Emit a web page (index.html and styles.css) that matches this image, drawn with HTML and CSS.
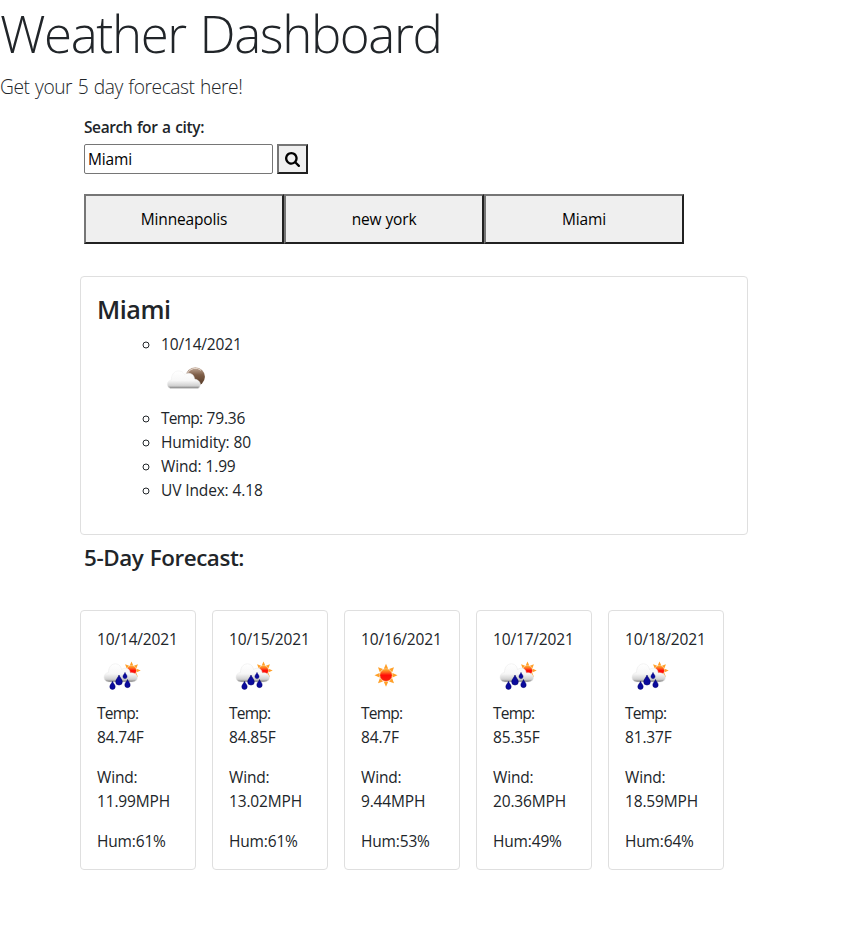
FILE: index.html
```html
<!DOCTYPE html>
<html lang="en">
<head>
<meta charset="utf-8">
<title>Weather Dashboard</title>
<link rel="stylesheet" href="styles.css">
</head>
<body>
<svg class="defs" width="0" height="0" aria-hidden="true">
  <defs>
    <linearGradient id="cloud-fill" x1="0" y1="0" x2="0" y2="1">
      <stop offset="0" stop-color="#fff"/><stop offset=".55" stop-color="#f7f7f7"/><stop offset=".85" stop-color="#d0d0d0"/><stop offset="1" stop-color="#777"/>
    </linearGradient>
    <linearGradient id="moon-fill" x1="0" y1="0" x2="0" y2="1">
      <stop offset="0" stop-color="#c5ad9b"/><stop offset=".4" stop-color="#7d5d47"/><stop offset="1" stop-color="#513522"/>
    </linearGradient>
    <linearGradient id="sun-fill" x1="0" y1="0" x2="0" y2="1">
      <stop offset="0" stop-color="#ffb52e"/><stop offset=".3" stop-color="#ff5a1c"/><stop offset=".5" stop-color="#ff0d08"/><stop offset="1" stop-color="#f8200c"/>
    </linearGradient>
    <g id="sun-shape">
      <path fill="#ffa028" d="M0-11.5 2.2-6.5H-2.2ZM0 11.5 2.2 6.5H-2.2ZM-11.5 0-6.5-2.2V2.2ZM11.5 0 6.5-2.2V2.2ZM-8-8-3-6.2-6.2-3ZM8-8 3-6.2 6.2-3ZM-8 8-3 6.2-6.2 3ZM8 8 3 6.2 6.2 3Z"/>
      <circle r="6.1" fill="url(#sun-fill)" stroke="#ff9d35" stroke-width=".6"/>
    </g>
    <path id="drop" d="M0-4.5C.8-2 3-.6 3 1.6A3 3 0 0 1-3 1.6C-3-.6-.8-2 0-4.5Z" fill="#0b0b9c" stroke="#00006a" stroke-width=".5"/>
    <symbol id="rain" viewBox="0 0 50 50">
      <use href="#sun-shape" transform="translate(34.500 19.600) scale(.8)"/>
      <path fill="url(#cloud-fill)" stroke="#e6e6e6" stroke-width=".5" d="M12 31C5.500 31 5.500 22 11.500 21.500C11.500 10.500 23.500 10.500 24.500 18.500C29 15.500 33.500 18 33 22C42 20.500 43 31 35 31Z"/>
      <use href="#drop" transform="translate(22 29) scale(1.100)"/>
      <use href="#drop" transform="translate(28 24.500) scale(.7)"/>
      <use href="#drop" transform="translate(30.500 32.500) scale(.9)"/>
      <use href="#drop" transform="translate(15.500 34.300) scale(.9)"/>
    </symbol>
    <symbol id="clear" viewBox="0 0 50 50"><use href="#sun-shape" x="25" y="24.200"/></symbol>
    <symbol id="night" viewBox="0 0 50 50">
      <circle cx="34.300" cy="20.800" r="9.600" fill="url(#moon-fill)"/>
      <path d="M26.500 17A9 9 0 0 1 40 14.300" fill="none" stroke="#e3d5ca" stroke-width="1"/>
      <path fill="url(#cloud-fill)" stroke="#ececec" stroke-width=".5" d="M9.500 32.500C4.800 31 5.500 24.300 10.500 24C9.800 14 20.500 12.500 23.500 18.500C28 15.500 33.500 18 33.500 23C39.500 24 41.500 30 37 32.500Z"/>
    </symbol>
  </defs>
</svg>

<header>
  <h1 class="title">Weather Dashboard</h1>
  <p class="lead">Get your 5 day forecast here!</p>
</header>

<main class="content">
  <form class="search">
    <label class="search-label" for="city">Search for a city:</label>
    <div class="search-row">
      <input class="search-input" id="city" type="text" value="Miami">
      <button class="search-button" type="button" aria-label="Search">
        <svg width="15" height="15" viewBox="0 0 1664 1664"><path d="M1152 704q0-185-131.500-316.500T704 256 387.500 387.500 256 704t131.500 316.500T704 1152t316.500-131.500T1152 704zm512 832q0 52-38 90t-90 38q-54 0-90-38l-343-342q-179 124-399 124-143 0-273.500-55.500t-225-150-150-225T0 704t55.500-273.500 150-225 225-150T704 0t273.500 55.500 225 150 150 225T1408 704q0 220-124 399l343 343q37 37 37 90z"/></svg>
      </button>
    </div>
  </form>

  <div class="history">
    <button class="city" type="button">Minneapolis</button>
    <button class="city" type="button">new york</button>
    <button class="city" type="button">Miami</button>
  </div>

  <section class="card current">
    <h3 class="current-name">Miami</h3>
    <ul class="facts">
      <li>10/14/2021</li>
      <li class="icon-row"><svg class="weather-icon" width="50" height="50"><use href="#night"/></svg></li>
      <li><span class="temp">Temp:</span> 79.36</li>
      <li>Humidity: 80</li>
      <li>Wind: 1.99</li>
      <li>UV Index: 4.18</li>
    </ul>
  </section>

  <h4 class="forecast-title">5-Day Forecast:</h4>
  <section class="forecast">
    <article class="card day">
      <div>10/14/2021</div>
      <svg class="weather-icon" width="50" height="50"><use href="#rain"/></svg>
      <p><span class="temp">Temp:</span><br>84.74F</p><p>Wind:<br>11.99MPH</p><p>Hum:61%</p>
    </article>
    <article class="card day">
      <div>10/15/2021</div>
      <svg class="weather-icon" width="50" height="50"><use href="#rain"/></svg>
      <p><span class="temp">Temp:</span><br>84.85F</p><p>Wind:<br>13.02MPH</p><p>Hum:61%</p>
    </article>
    <article class="card day">
      <div>10/16/2021</div>
      <svg class="weather-icon" width="50" height="50"><use href="#clear"/></svg>
      <p><span class="temp">Temp:</span><br>84.7F</p><p>Wind:<br>9.44MPH</p><p>Hum:53%</p>
    </article>
    <article class="card day">
      <div>10/17/2021</div>
      <svg class="weather-icon" width="50" height="50"><use href="#rain"/></svg>
      <p><span class="temp">Temp:</span><br>85.35F</p><p>Wind:<br>20.36MPH</p><p>Hum:49%</p>
    </article>
    <article class="card day">
      <div>10/18/2021</div>
      <svg class="weather-icon" width="50" height="50"><use href="#rain"/></svg>
      <p><span class="temp">Temp:</span><br>81.37F</p><p>Wind:<br>18.59MPH</p><p>Hum:64%</p>
    </article>
  </section>
</main>
</body>
</html>
```
FILE: styles.css
```css
*, *::before, *::after { box-sizing: border-box; }

body {
  margin: 0;
  background: #fff;
  color: #212529;
  font-family: "Segoe UI", "Open Sans", "Noto Sans", sans-serif;
  font-size: 15.5px;
  line-height: 24px;
  letter-spacing: -0.16px;
  word-spacing: 0.2px;
}

h1, h3, h4, p, ul { margin: 0; }

button, input { font: inherit; letter-spacing: inherit; word-spacing: inherit; color: #000; }

.defs { position: absolute; }

.title {
  margin-bottom: 6px;
  font-size: 51px;
  font-weight: 300;
  line-height: 66px;
  letter-spacing: -1.4px;
  word-spacing: 2px;
  white-space: nowrap;
}

.lead {
  margin-bottom: 13px;
  font-size: 19.2px;
  font-weight: 300;
  line-height: 30px;
  letter-spacing: -0.44px;
  word-spacing: 1px;
}

.content { padding-left: 80px; }

.search { padding-left: 4px; }

.search-label {
  display: block;
  margin-bottom: 5px;
  font-weight: 600;
  letter-spacing: -0.4px;
  word-spacing: 1px;
}

.search-row { display: flex; gap: 4px; }

.search-input {
  width: 189px;
  height: 30px;
  padding: 1px 3px;
  border: 1px solid #767676;
  border-radius: 2px;
  background: #fff;
}

.search-button {
  display: flex;
  align-items: center;
  justify-content: center;
  width: 31px;
  height: 30px;
  padding: 0;
  border: 2px solid;
  border-color: #767676 #212121 #212121 #767676;
  background: #efefef;
}

.history { display: flex; margin: 20px 0 32px 4px; }

.city {
  width: 200px;
  height: 50px;
  padding: 0;
  border: 2px solid;
  border-color: #767676 #212121 #212121 #767676;
  background: #efefef;
}

.card {
  border: 1px solid #dfdfdf;
  border-radius: 4px;
  padding: 16px;
}

.current { width: 668px; height: 259px; }

.current-name {
  margin-bottom: 6px;
  font-size: 25.2px;
  font-weight: 600;
  line-height: 33px;
  letter-spacing: -0.45px;
}

.facts { padding-left: 64px; list-style: circle; }

.icon-row { list-style: none; }

.weather-icon { display: block; }

.temp { letter-spacing: -0.75px; }

.forecast-title {
  margin: 9px 0 38px 4px;
  font-size: 22.4px;
  font-weight: 600;
  line-height: 28px;
  letter-spacing: -0.42px;
  word-spacing: 1px;
}

.forecast { display: flex; gap: 16px; }

.day { width: 116px; height: 260px; white-space: nowrap; }

.day p + p { margin-top: 16px; }
```
